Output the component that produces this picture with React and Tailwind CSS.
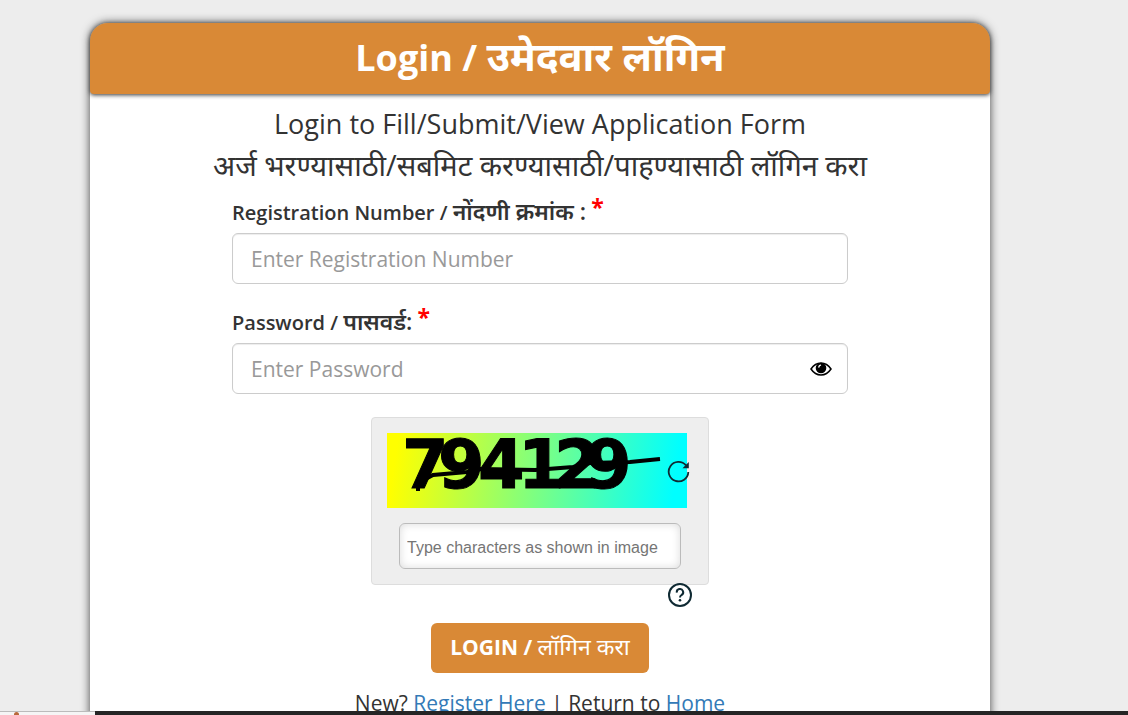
import React, { useState } from 'react';

const captchaDigits = [
  { char: '7', x: 15 },
  { char: '9', x: 51 },
  { char: '4', x: 91 },
  { char: '1', x: 131 },
  { char: '2', x: 167 },
  { char: '9', x: 198 },
];

const EyeIcon = () => (
  <svg viewBox="0 0 22 16" className="w-[22px] h-4" aria-hidden="true">
    <path d="M1 8 C4 3.500 7.500 2 11 2 C14.500 2 18 3.500 21 8 C18 12.500 14.500 14 11 14 C7.500 14 4 12.500 1 8 Z" fill="none" stroke="#000" strokeWidth="1.500" />
    <circle cx="11" cy="7" r="5.300" fill="#000" />
    <path d="M8.800 6 A2.500 2.500 0 0 1 10.500 4.200" fill="none" stroke="#fff" strokeWidth="1.300" strokeLinecap="round" />
  </svg>
);

const ReloadIcon = () => (
  <svg viewBox="0 0 24 24" className="w-6 h-6" aria-hidden="true">
    <path d="M22.300 13 A9.800 9.800 0 1 1 20 6.300" fill="none" stroke="#0f2a33" strokeWidth="1.800" />
    <path d="M22.800 3 V9.300 H16.500 Z" fill="#0f2a33" />
  </svg>
);

const HelpIcon = () => (
  <svg viewBox="0 0 24 24" className="w-6 h-6" aria-hidden="true">
    <circle cx="12" cy="12" r="11" fill="#fff" stroke="#0f2a33" strokeWidth="2" />
    <path d="M8.800 9.600 A3.200 3.200 0 1 1 13.500 12 C12.400 12.700 12 13.100 12 14.500" fill="none" stroke="#0f2a33" strokeWidth="2" />
    <circle cx="12" cy="17.200" r="1.300" fill="#0f2a33" />
  </svg>
);

const Field = ({ id, label, marathi, placeholder, type, children }) => (
  <div>
    <label htmlFor={id} className="block text-[20px] leading-[30px] font-semibold">
      {label} / <span className="text-[23px] leading-none font-semibold">{marathi}</span>{' '}
      <span className="text-[23px] leading-none text-[red] font-bold relative -top-1">*</span>
    </label>
    <div className="relative mt-[5px]">
      <input
        id={id}
        type={type}
        placeholder={placeholder}
        className="block w-full h-[51px] px-[18px] text-[21px] bg-white border border-[#ccc] rounded-md shadow-[inset_0_1px_1px_rgba(0,0,0,0.075)] placeholder:text-[#999]"
      />
      {children}
    </div>
  </div>
);

const Captcha = () => (
  <div className="relative w-[338px] mt-[23px] mx-auto p-[15px] bg-[#eee] border border-[#ddd] rounded-sm">
    <div className="relative w-[300px]">
      <svg viewBox="0 0 300 75" className="block w-full h-[75px]" role="img" aria-label="Captcha">
        <defs>
          <linearGradient id="captchaBg" gradientUnits="userSpaceOnUse" x1="10" y1="10" x2="288" y2="50">
            <stop offset="0" stopColor="#ff0" />
            <stop offset="1" stopColor="#0ff" />
          </linearGradient>
        </defs>
        <rect width="300" height="75" fill="url(#captchaBg)" />
        <g fontFamily="DejaVu Sans" fontWeight="bold" fontSize="67" stroke="#000" strokeWidth="1">
          {captchaDigits.map((digit) => (
            <text key={digit.x} x={digit.x} y="55">{digit.char}</text>
          ))}
        </g>
        <path d="M31 58 V50 L46 42 L80 39 L93 36 L148 37 L186 34 L203 30 L243 29 L273 26" fill="none" stroke="#000" strokeWidth="4" />
      </svg>
      <button type="button" aria-label="Reload captcha" className="absolute top-[26px] -right-[3px] cursor-pointer">
        <ReloadIcon />
      </button>
    </div>
    <input
      type="text"
      aria-label="Captcha characters"
      placeholder="Type characters as shown in image"
      className="block w-[282px] h-[46px] mt-[15px] mx-auto px-[7px] pt-1 bg-white border border-[#bbb] rounded-md font-['Liberation_Sans',sans-serif] text-[16px] shadow-[inset_0_0_8px_rgba(0,0,0,0.15)] placeholder:text-[#757575]"
    />
    <button type="button" aria-label="Help" className="absolute right-4 -bottom-[23px] cursor-pointer">
      <HelpIcon />
    </button>
  </div>
);

const App = () => {
  const [showPassword, setShowPassword] = useState(false);

  return (
    <div className="h-screen flex flex-col overflow-hidden bg-[#ededed] text-[#333] font-['Open_Sans','Noto_Sans','Noto_Sans_Devanagari',sans-serif]">
      <div className="flex-1 min-h-0 overflow-hidden pt-[23px] pr-12">
        <main className="max-w-[900px] min-h-full mx-auto bg-white rounded-t-[18px] shadow-[0_0_10px_#444]">
          <header className="pt-[7px] pb-[9px] bg-[#d98936] rounded-t-[18px] rounded-b-sm shadow-[0_1px_4px_#333] text-center text-white">
            <h1 className="text-[36px] leading-[55px] font-bold">
              Login / <span className="text-[40px] leading-none">उमेदवार लॉगिन</span>
            </h1>
          </header>
          <div className="max-w-[616px] mx-auto pt-[9px] pb-6">
            <div className="-mx-6 text-center">
              <p className="text-[27px] leading-[41px]">Login to Fill/Submit/View Application Form</p>
              <p className="text-[29px] leading-[41px]">अर्ज भरण्यासाठी/सबमिट करण्यासाठी/पाहण्यासाठी लॉगिन करा</p>
            </div>
            <form className="mt-[13px]" onSubmit={(e) => e.preventDefault()}>
              <div className="space-y-6">
                <Field
                  id="registration"
                  type="text"
                  label="Registration Number"
                  marathi="नोंदणी क्रमांक :"
                  placeholder="Enter Registration Number"
                />
                <Field
                  id="password"
                  type={showPassword ? 'text' : 'password'}
                  label="Password"
                  marathi="पासवर्ड:"
                  placeholder="Enter Password"
                >
                  <button
                    type="button"
                    aria-label="Show password"
                    onClick={() => setShowPassword(!showPassword)}
                    className="absolute inset-y-0 right-4 flex items-center cursor-pointer"
                  >
                    <EyeIcon />
                  </button>
                </Field>
              </div>
              <Captcha />
              <button
                type="submit"
                className="block mt-[38px] mx-auto h-[50px] px-[19px] bg-[#d98936] rounded-md text-white text-[21px] cursor-pointer"
              >
                <span className="font-bold">LOGIN /</span> <span className="text-[23px] leading-none">लॉगिन करा</span>
              </button>
            </form>
            <p className="mt-[15px] text-center text-[21px] leading-[30px]">
              New? <a href="#register" className="text-[#337ab7]">Register Here</a> | Return to{' '}
              <a href="#home" className="text-[#337ab7]">Home</a>
            </p>
          </div>
        </main>
      </div>
      <footer className="h-1 flex shrink-0 bg-[#252525]">
        <div className="w-[95px] bg-[#f5f5f5] border-t border-[#bbb] pl-[14px]">
          <div className="w-[5px] h-[3px] rounded-t-full bg-[#b8683a]" />
        </div>
      </footer>
    </div>
  );
};

export default App;
